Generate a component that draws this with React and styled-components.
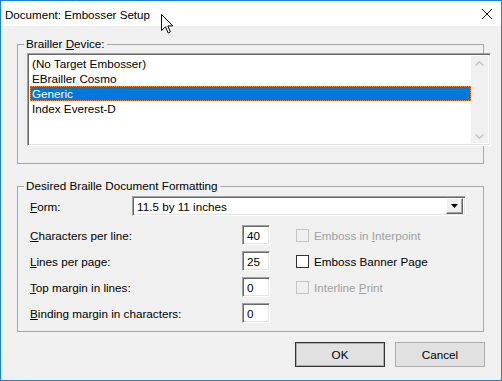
import React from "react"
import styled, {createGlobalStyle, css} from "styled-components"

const GlobalStyle = createGlobalStyle`
  html, body {
    margin: 0;
    padding: 0;
    background: #f0f0f0;
  }
  body {
    font-family: "Liberation Sans", Arial, sans-serif;
    font-size: 11.7px;
    color: #000;
  }
  * {
    box-sizing: border-box;
  }
`

const sunken = css`
  border: 1px solid;
  border-color: #a0a0a0 #fff #fff #a0a0a0;
  box-shadow: inset 1px 1px 0 #696969, inset -1px -1px 0 #e3e3e3;
  background: #fff;
`

const Window = styled.div`
  position: relative;
  width: 502px;
  height: 381px;
  border: 1px solid #1883d7;
  display: flex;
  flex-direction: column;
  background: #f0f0f0;
  overflow: hidden;
`

const TitleBar = styled.div`
  height: 25px;
  flex: none;
  background: #fff;
  display: flex;
  align-items: center;
  padding: 0 9px 0 4px;
`

const Title = styled.span`
  flex: 1;
  font-size: 11.6px;
  margin-top: 1px;
`

const Cursor = styled.svg`
  position: absolute;
  left: 160px;
  top: 13px;
`

const Client = styled.div`
  flex: 1;
  display: flex;
  flex-direction: column;
  padding: 11px 16px 0 16px;
`

const Group = styled.fieldset`
  margin: 0;
  margin-top: ${p => p.gap || 0}px;
  width: 467px;
  min-width: 0;
  border: 1px solid #a9a9a9;
  padding: 0;
`

const Legend = styled.legend`
  margin-left: 6px;
  padding: 0 2px;
  line-height: 14px;
`

const GroupBody = styled.div`
  padding: ${p => p.pad};
`

const U = styled.span`
  text-decoration: underline;
  text-underline-offset: 1px;
`

const ListBox = styled.div`
  ${sunken};
  width: 464px;
  height: 93px;
  display: flex;
  padding: 2px;
`

const Items = styled.div`
  flex: 1;
`

const Item = styled.div`
  height: 15px;
  line-height: 15px;
  padding-left: 2px;
  white-space: nowrap;
  ${p => p.selected && css`
    background: #0078d7;
    color: #fff;
    outline: 1px dotted #ff8728;
    outline-offset: -1px;
  `}
`

const ScrollBar = styled.div`
  width: 17px;
  background: #f0f0f0;
  display: flex;
  flex-direction: column;
  justify-content: space-between;
  align-items: center;
  padding: 5px 0 4px;
`

const FormRow = styled.div`
  display: flex;
  align-items: center;
  height: 20px;
`

const Label = styled.span`
  width: ${p => p.w}px;
  flex: none;
  white-space: nowrap;
`

const Combo = styled.div`
  ${sunken};
  width: 334px;
  height: 20px;
  display: flex;
  align-items: center;
  padding: 2px;
`

const ComboText = styled.span`
  flex: 1;
  padding-left: 2px;
`

const DropButton = styled.div`
  width: 17px;
  height: 16px;
  background: #f0f0f0;
  border: 1px solid;
  border-color: #fff #696969 #696969 #fff;
  box-shadow: inset -1px -1px 0 #a0a0a0;
  display: flex;
  align-items: center;
  justify-content: center;
`

const Fields = styled.div`
  margin-top: 9px;
  display: grid;
  grid-template-columns: 212px 28px auto;
  grid-auto-rows: 20px;
  row-gap: 6px;
  align-items: center;
`

const TextBox = styled.div`
  ${sunken};
  height: 20px;
  padding: 0 4px;
  display: flex;
  align-items: center;
`

const Check = styled.label`
  display: flex;
  align-items: center;
  gap: 5px;
  margin-left: 26px;
  color: ${p => p.disabled ? "#a0a0a0" : "#000"};
  white-space: nowrap;
`

const Box = styled.span`
  width: 13px;
  height: 13px;
  border: 1px solid ${p => p.disabled ? "#c4c4c4" : "#333"};
  background: ${p => p.disabled ? "#f0f0f0" : "#fff"};
`

const Buttons = styled.div`
  margin-top: 10px;
  display: flex;
  justify-content: flex-end;
  gap: 10px;
`

const Button = styled.div`
  width: 90px;
  height: 25px;
  display: flex;
  align-items: center;
  justify-content: center;
  background: #e1e1e1;
  border: 1px solid ${p => p.primary ? "#333" : "#adadad"};
  ${p => p.primary && css`box-shadow: inset 0 0 0 1px #adadad;`}
`

const fields = [
  {label: ["C", "haracters per line:"], value: "40", check: {text: ["Emboss in ", "I", "nterpoint"], disabled: true}},
  {label: ["L", "ines per page:"], value: "25", check: {text: ["Emboss Banner Page", "", ""]}},
  {label: ["T", "op margin in lines:"], value: "0", check: {text: ["Interline ", "P", "rint"], disabled: true}},
  {label: ["B", "inding margin in characters:"], value: "0"},
]

const devices = ["(No Target Embosser)", "EBrailler Cosmo", "Generic", "Index Everest-D"]

const Chevron = ({up}) => (
  <svg width="9" height="5" viewBox="0 0 9 5">
    <path d={up ? "M0.5 4.5 L4.5 0.8 L8.5 4.5" : "M0.5 0.5 L4.5 4.2 L8.5 0.5"} fill="none" stroke="#c0c0c0" strokeWidth="1.3" />
  </svg>
)

export default function App() {
  return (
    <Window>
      <GlobalStyle />
      <TitleBar>
        <Title>Document: Embosser Setup</Title>
        <svg width="10" height="10" viewBox="0 0 10 10">
          <path d="M0 0 L10 10 M10 0 L0 10" stroke="#111" strokeWidth="1" />
        </svg>
      </TitleBar>
      <Cursor width="13" height="20" viewBox="0 0 13 20">
        <path d="M0.5 0.5 L0.5 16.5 L4.5 12.8 L7.2 19 L9.4 18 L6.8 11.9 L11.8 11.9 Z" fill="#fff" stroke="#000" strokeWidth="1" strokeLinejoin="round" />
      </Cursor>
      <Client>
        <Group>
          <Legend>Brailler <U>D</U>evice:</Legend>
          <GroupBody pad="2px 0 17px 9px">
            <ListBox>
              <Items>
                {devices.map(d => (
                  <Item key={d} selected={d === "Generic"}>{d}</Item>
                ))}
              </Items>
              <ScrollBar>
                <Chevron up />
                <Chevron />
              </ScrollBar>
            </ListBox>
          </GroupBody>
        </Group>
        <Group gap={15}>
          <Legend>Desired Braille Document Formatting</Legend>
          <GroupBody pad="3px 0 8px 12px">
            <FormRow>
              <Label w={102}><U>F</U>orm:</Label>
              <Combo>
                <ComboText>11.5 by 11 inches</ComboText>
                <DropButton>
                  <svg width="7" height="4" viewBox="0 0 7 4">
                    <path d="M0 0 L7 0 L3.5 4 Z" fill="#000" />
                  </svg>
                </DropButton>
              </Combo>
            </FormRow>
            <Fields>
              {fields.map(f => (
                <React.Fragment key={f.label[1]}>
                  <Label><U>{f.label[0]}</U>{f.label[1]}</Label>
                  <TextBox>{f.value}</TextBox>
                  {f.check ? (
                    <Check disabled={f.check.disabled}>
                      <Box disabled={f.check.disabled} />
                      <span>{f.check.text[0]}{f.check.text[1] && <U>{f.check.text[1]}</U>}{f.check.text[2]}</span>
                    </Check>
                  ) : <span />}
                </React.Fragment>
              ))}
            </Fields>
          </GroupBody>
        </Group>
        <Buttons>
          <Button primary>OK</Button>
          <Button>Cancel</Button>
        </Buttons>
      </Client>
    </Window>
  )
}
